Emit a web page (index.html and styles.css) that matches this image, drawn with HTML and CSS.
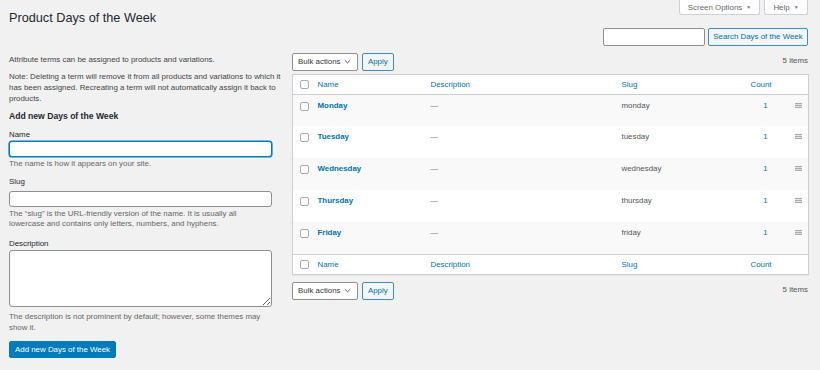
FILE: index.html
```html
<!DOCTYPE html>
<html lang="en">
<head>
<meta charset="utf-8">
<title>Product Days of the Week</title>
<link rel="stylesheet" href="styles.css">
</head>
<body>
<div class="wrap">
  <div class="top">
    <h1 class="title">Product Days of the Week</h1>
    <div class="meta">
      <div class="meta-tab tab-screen">Screen Options <span class="tri">▼</span></div>
      <div class="meta-tab tab-help">Help <span class="tri">▼</span></div>
    </div>
  </div>
  <div class="search">
    <div class="search-input"></div>
    <div class="btn search-btn">Search Days of the Week</div>
  </div>
  <div class="cols">
    <div class="col-left">
      <p class="intro">Attribute terms can be assigned to products and variations.</p>
      <p class="note">Note: Deleting a term will remove it from all products and variations to which it has been assigned. Recreating a term will not automatically assign it back to products.</p>
      <h2 class="add-title">Add new Days of the Week</h2>
      <div class="field name-field">
        <label class="label">Name</label>
        <div class="input focused"></div>
        <p class="hint">The name is how it appears on your site.</p>
      </div>
      <div class="field slug-field">
        <label class="label">Slug</label>
        <div class="input"></div>
        <p class="hint">The “slug” is the URL-friendly version of the name. It is usually all lowercase and contains only letters, numbers, and hyphens.</p>
      </div>
      <div class="field desc-field">
        <label class="label">Description</label>
        <textarea class="textarea"></textarea>
        <p class="hint">The description is not prominent by default; however, some themes may show it.</p>
      </div>
      <div class="btn-primary">Add new Days of the Week</div>
    </div>
    <div class="col-right">
      <div class="tablenav">
        <div class="actions">
          <div class="select">Bulk actions <svg class="chev" width="7" height="5" viewBox="0 0 7 5"><path d="M0.8 1.2 L3.5 3.8 L6.2 1.2" fill="none" stroke="#555" stroke-width="1"/></svg></div>
          <div class="btn apply">Apply</div>
        </div>
        <div class="count-items">5 items</div>
      </div>
      <table class="terms">
        <colgroup>
          <col class="c-check"><col class="c-name"><col class="c-desc"><col class="c-slug"><col class="c-count"><col class="c-handle">
        </colgroup>
        <thead>
          <tr class="head"><td class="chk"><span class="cb"></span></td><th>Name</th><th>Description</th><th>Slug</th><th class="count-h">Count</th><th></th></tr>
        </thead>
        <tbody>
          <tr class="alt"><td class="chk"><span class="cb"></span></td><td class="nm">Monday</td><td class="ds">—</td><td class="sl">monday</td><td class="ct">1</td><td class="hd"><svg width="7" height="5" viewBox="0 0 7 5"><rect y="0" width="7" height="1.2" fill="#a7aaad"/><rect y="1.9" width="7" height="1.2" fill="#a7aaad"/><rect y="3.8" width="7" height="1.2" fill="#a7aaad"/></svg></td></tr>
          <tr><td class="chk"><span class="cb"></span></td><td class="nm">Tuesday</td><td class="ds">—</td><td class="sl">tuesday</td><td class="ct">1</td><td class="hd"><svg width="7" height="5" viewBox="0 0 7 5"><rect y="0" width="7" height="1.2" fill="#a7aaad"/><rect y="1.9" width="7" height="1.2" fill="#a7aaad"/><rect y="3.8" width="7" height="1.2" fill="#a7aaad"/></svg></td></tr>
          <tr class="alt"><td class="chk"><span class="cb"></span></td><td class="nm">Wednesday</td><td class="ds">—</td><td class="sl">wednesday</td><td class="ct">1</td><td class="hd"><svg width="7" height="5" viewBox="0 0 7 5"><rect y="0" width="7" height="1.2" fill="#a7aaad"/><rect y="1.9" width="7" height="1.2" fill="#a7aaad"/><rect y="3.8" width="7" height="1.2" fill="#a7aaad"/></svg></td></tr>
          <tr><td class="chk"><span class="cb"></span></td><td class="nm">Thursday</td><td class="ds">—</td><td class="sl">thursday</td><td class="ct">1</td><td class="hd"><svg width="7" height="5" viewBox="0 0 7 5"><rect y="0" width="7" height="1.2" fill="#a7aaad"/><rect y="1.9" width="7" height="1.2" fill="#a7aaad"/><rect y="3.8" width="7" height="1.2" fill="#a7aaad"/></svg></td></tr>
          <tr class="alt"><td class="chk"><span class="cb"></span></td><td class="nm">Friday</td><td class="ds">—</td><td class="sl">friday</td><td class="ct">1</td><td class="hd"><svg width="7" height="5" viewBox="0 0 7 5"><rect y="0" width="7" height="1.2" fill="#a7aaad"/><rect y="1.9" width="7" height="1.2" fill="#a7aaad"/><rect y="3.8" width="7" height="1.2" fill="#a7aaad"/></svg></td></tr>
        </tbody>
        <tfoot>
          <tr class="foot"><td class="chk"><span class="cb"></span></td><th>Name</th><th>Description</th><th>Slug</th><th class="count-h">Count</th><th></th></tr>
        </tfoot>
      </table>
      <div class="tablenav bottom">
        <div class="actions">
          <div class="select">Bulk actions <svg class="chev" width="7" height="5" viewBox="0 0 7 5"><path d="M0.8 1.2 L3.5 3.8 L6.2 1.2" fill="none" stroke="#555" stroke-width="1"/></svg></div>
          <div class="btn apply">Apply</div>
        </div>
        <div class="count-items">5 items</div>
      </div>
    </div>
  </div>
</div>
</body>
</html>
```

FILE: styles.css
```css
* { box-sizing: border-box; }
body {
  margin: 0;
  background: #f1f1f1;
  font-family: "Liberation Sans", Arial, sans-serif;
  font-size: 7.9px;
  color: #444;
}
.wrap { padding: 0 12px 0 9px; }

.top { display: flex; justify-content: space-between; align-items: flex-start; }
.title {
  margin: 10px 0 0;
  font-size: 12.7px;
  font-weight: 400;
  line-height: 16px;
  color: #23282d;
}
.meta { display: flex; gap: 4px; flex-shrink: 0; }
.meta-tab {
  height: 15px;
  background: #fff;
  border: 1px solid #ccd0d4;
  border-top: 0;
  border-radius: 0 0 3px 3px;
  color: #666;
  display: flex;
  align-items: center;
  justify-content: center;
  gap: 4px;
  flex-shrink: 0;
}
.tab-screen { width: 81px; }
.tab-help { width: 44px; }
.tri { font-size: 5px; color: #72777c; }

.search { display: flex; justify-content: flex-end; gap: 3px; margin-top: 2px; }
.search-input {
  width: 102px; height: 17.5px;
  background: #fff;
  border: 1px solid #8c8f94;
  border-radius: 2px;
}
.btn {
  height: 17.5px;
  background: #f3f5f6;
  border: 1px solid #3a8dbd;
  border-radius: 2px;
  color: #0071a1;
  display: flex; align-items: center; justify-content: center;
}
.search-btn { width: 100px; }

.cols {
  display: grid;
  grid-template-columns: 277px 516px;
  column-gap: 6px;
  margin-top: 7px;
  align-items: start;
}

/* left */
.col-left p { margin: 0; }
.intro { line-height: 11.3px; margin-top: 1px !important; }
.note { line-height: 11.3px; margin-top: 6px !important; }
.add-title {
  margin: 6px 0 0;
  font-size: 8.6px;
  font-weight: 700;
  line-height: 11.3px;
  color: #23282d;
}
.label { display: block; line-height: 11px; color: #23282d; }
.name-field { margin-top: 7.5px; }
.slug-field { margin-top: 6.5px; }
.desc-field { margin-top: 9px; }
.input {
  width: 95%;
  height: 16px;
  background: #fff;
  border: 1px solid #8c8f94;
  border-radius: 3px;
  margin-top: 1px;
}
.slug-field .input { margin-top: 4px; }
.input.focused {
  border-color: #007cba;
  box-shadow: 0 0 0 0.6px #007cba;
}
.hint { color: #666; line-height: 10px; margin-top: 2px !important; padding-right: 14px; }
.textarea {
  display: block;
  width: 95%;
  height: 57px;
  margin: 1px 0 0;
  background: #fff;
  border: 1px solid #8c8f94;
  border-radius: 3px;
  font: inherit;
}
.desc-field .hint { line-height: 11.4px; margin-top: 4px !important; }
.btn-primary {
  display: inline-flex; align-items: center;
  height: 17.5px;
  margin-top: 7px;
  width: 107px;
  justify-content: center;
  background: #007cba;
  border: 1px solid #007cba;
  border-radius: 2px;
  color: #fff;
}

/* right */
.tablenav { display: flex; justify-content: space-between; align-items: flex-start; }
.actions { display: flex; gap: 4px; }
.select {
  width: 65.5px; height: 18px;
  background: #fff;
  border: 1px solid #8c8f94;
  border-radius: 2px;
  color: #32373c;
  display: flex; align-items: center;
  padding-left: 5px; gap: 3px;
}
.chev { display: block; }
.apply { width: 32.5px; height: 18px; }
.count-items { color: #555; line-height: 14px; margin-top: 1px; }
.tablenav.bottom { margin-top: 7px; }

.terms {
  width: 516px;
  margin-top: 3px;
  border-collapse: collapse;
  table-layout: fixed;
  background: #fff;
  border: 1px solid #ccd0d4;
  box-shadow: 0 1px 1px rgba(0,0,0,0.04);
}
.c-check { width: 20px; }
.c-name { width: 113px; }
.c-desc { width: 191px; }
.c-slug { width: 124px; }
.c-count { width: 50px; }
.c-handle { width: 18px; }

.terms th {
  font-weight: 400;
  color: #0073aa;
  text-align: left;
  padding: 0 5px;
  height: 20px;
  vertical-align: middle;
}
.terms th.count-h { text-align: center; padding-right: 14px; }
.head { border-bottom: 1px solid #ccd0d4; }
.foot { border-top: 1px solid #ccd0d4; }
.terms tbody tr { background: #fff; }
.terms tbody tr.alt { background: #f9f9f9; }
.terms tbody td {
  height: 32px;
  vertical-align: top;
  padding: 6px 5px 0;
  line-height: 9px;
}
.terms td.chk { padding: 0 0 0 7px; vertical-align: top; }
.head td.chk, .foot td.chk { vertical-align: middle; }
.terms tbody td.chk { padding-top: 7px; }
.cb {
  display: block;
  width: 9px; height: 9px;
  background: #fff;
  border: 1px solid #a7aaad;
  border-radius: 2px;
}
.nm { color: #0073aa; font-weight: 700; }
.ds { color: #72777c; }
.sl { color: #555; }
.ct { color: #0073aa; text-align: center; }
.terms td.hd { padding: 8px 0 0 4px; }
.hd svg { display: block; }
```
